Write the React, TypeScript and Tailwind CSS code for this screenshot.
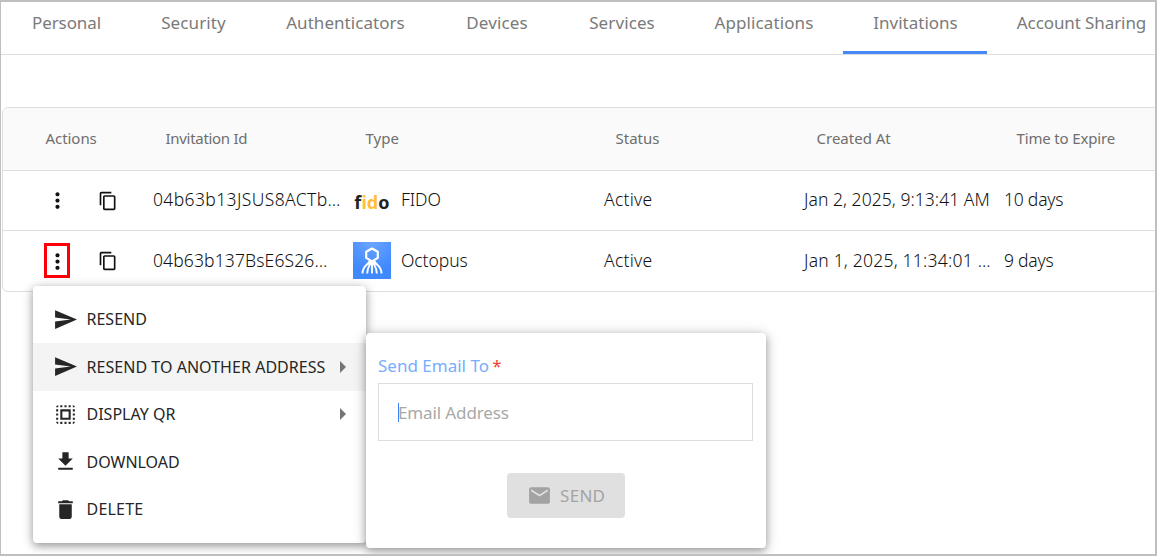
import type { ReactNode } from "react";
import {
  MdContentCopy,
  MdDelete,
  MdEmail,
  MdFileDownload,
  MdMoreVert,
  MdSelectAll,
  MdSend,
} from "react-icons/md";

const tabs = [
  { label: "Personal", box: "w-[128px]", track: "tracking-[-0.1px]" },
  { label: "Security", box: "w-[126px]", track: "tracking-[0.1px]" },
  { label: "Authenticators", box: "w-[178px]", track: "tracking-[0.05px]" },
  { label: "Devices", box: "w-[125px]", track: "tracking-[0.15px]" },
  { label: "Services", box: "w-[125px]", track: "tracking-[0.1px]" },
  { label: "Applications", box: "w-[159px]", track: "tracking-[0.1px]" },
  { label: "Invitations", box: "w-[144px]", track: "", active: true },
  { label: "Account Sharing", box: "w-[188px]", track: "tracking-[-0.1px]" },
];

const columns = [
  { label: "Actions", track: "tracking-[-0.05px]" },
  { label: "Invitation Id", track: "tracking-[-0.3px]" },
  { label: "Type", track: "" },
  { label: "Status", track: "" },
  { label: "Created At", track: "" },
  { label: "Time to Expire", track: "tracking-[-0.15px]" },
];

const grid = "grid grid-cols-[138px_200px_250px_201px_200px_200px] items-center";

function FidoLogo() {
  return (
    <span className="w-[38px] pt-[5px] text-center text-[18px] leading-none font-bold tracking-[0.1px] text-[#222]">
      f<span className="text-[#ffbf3b]">id</span>o
    </span>
  );
}

function OctopusLogo() {
  return (
    <svg className="h-[37px] w-[38px]" viewBox="0 0 38 37" fill="none">
      <defs>
        <radialGradient id="octo" cx="0.5" cy="0" r="0.8">
          <stop offset="0" stopColor="#6ba5ff" />
          <stop offset="1" stopColor="#3f89fc" />
        </radialGradient>
      </defs>
      <rect width="38" height="37" fill="url(#octo)" />
      <path
        d="M19 6.500l5.800 3.200v6.200l-5.800 3.500-5.800-3.500V9.700z"
        stroke="#fff"
        strokeWidth="2.200"
        strokeLinejoin="round"
      />
      <path
        d="M17 18.500c-1 4.500-7.500 4.500-7.500 13M18 19c-.3 4.500-3.800 5-3.800 12.500M19 18.500v13M20 19c.3 4.500 3.800 5 3.800 12.500M21 18.500c1 4.500 7.500 4.500 7.500 13"
        stroke="#fff"
        strokeWidth="1.900"
      />
      <path d="M16 18.500h6l1.500 4-4.500 1-4.500-1z" fill="#fff" />
    </svg>
  );
}

type Row = {
  id: ReactNode;
  type: ReactNode;
  logo: ReactNode;
  created: ReactNode;
  expire: string;
  marked?: boolean;
};

const rows: Row[] = [
  {
    id: <span className="tracking-[0.38px]">04b63b13JSUS8ACTb…</span>,
    logo: <FidoLogo />,
    type: <span className="tracking-[-0.1px]">FIDO</span>,
    created: <span className="tracking-[0.05px]">Jan 2, 2025, 9:13:41 AM</span>,
    expire: "10 days",
  },
  {
    id: <span className="tracking-[0.13px]">04b63b137BsE6S26…</span>,
    logo: <OctopusLogo />,
    type: <span className="tracking-[-0.08px]">Octopus</span>,
    created: <span className="tracking-[0.22px]">Jan 1, 2025, 11:34:01 …</span>,
    expire: "9 days",
    marked: true,
  },
];

const menu = [
  { label: "RESEND", icon: MdSend, track: "" },
  { label: "RESEND TO ANOTHER ADDRESS", icon: MdSend, track: "tracking-[0.04px]", sub: true, hover: true },
  { label: "DISPLAY QR", icon: MdSelectAll, track: "", sub: true },
  { label: "DOWNLOAD", icon: MdFileDownload, track: "" },
  { label: "DELETE", icon: MdDelete, track: "tracking-[0.2px]" },
];

function Tabs() {
  return (
    <nav className="flex h-[53px] w-[1174px] border-b border-[#dedede] pl-px text-[17px] text-[#7a7a7a]">
      {tabs.map((t) => (
        <div
          key={t.label}
          className={`flex shrink-0 justify-center border-b-[3px] pt-[9px] pl-px leading-6 ${t.box} ${t.track} ${t.active ? "border-[#4489f7]" : "border-transparent"}`}
        >
          {t.label}
        </div>
      ))}
    </nav>
  );
}

function Table() {
  return (
    <section className="mt-[52px] ml-px w-[1190px] overflow-hidden rounded-md border border-[#dedede]">
      <header className={`${grid} h-[63px] border-b border-[#dedede] bg-[#fafafa] pb-[2px] pl-3 text-[15px] text-[#6e6e6e]`}>
        {columns.map((c, i) => (
          <div key={c.label} className={`${c.track} ${i === 0 ? "pl-[30.5px]" : "pl-[12.5px]"}`}>
            {c.label}
          </div>
        ))}
      </header>
      {rows.map((r) => (
        <div
          key={r.expire}
          className={`${grid} h-[60px] border-b border-[#dedede] pb-[2px] pl-3 text-[17.5px] font-light whitespace-nowrap text-[#111] last:border-b-0`}
        >
          <div className="flex items-center gap-[28px] pl-[29px]">
            <span
              className={`flex h-[35px] w-[26px] items-center justify-center border-3 pt-[2px] pl-px ${r.marked ? "border-[#fb0007]" : "border-transparent"}`}
            >
              <MdMoreVert className="size-[25px] shrink-0" />
            </span>
            <span className="pt-[2px]">
              <MdContentCopy className="size-[20px]" />
            </span>
          </div>
          <div>{r.id}</div>
          <div className="flex items-center gap-[10px]">
            {r.logo}
            {r.type}
          </div>
          <div className="pl-px tracking-[0.25px]">Active</div>
          <div>{r.created}</div>
          <div className="tracking-[-0.22px]">{r.expire}</div>
        </div>
      ))}
    </section>
  );
}

function ActionMenu() {
  return (
    <div className="absolute top-[286px] left-[33px] h-[257px] w-[333px] rounded bg-white pt-[9.5px] shadow-[0_3px_8px_rgba(0,0,0,0.35),0_1px_14px_rgba(0,0,0,0.12)]">
      {menu.map((m) => (
        <div
          key={m.label}
          className={`flex h-[47.5px] items-center pr-5 pl-5 text-[16px] text-[#262626] ${m.hover ? "bg-[#f4f4f4]" : ""}`}
        >
          <m.icon className="mr-[8.5px] size-[25px] shrink-0" />
          <span className={`whitespace-nowrap ${m.track}`}>{m.label}</span>
          {m.sub && (
            <svg className="ml-auto h-3 w-[6px] shrink-0" viewBox="0 0 6 12" fill="#757575">
              <path d="M0 0l6 6-6 6z" />
            </svg>
          )}
        </div>
      ))}
    </div>
  );
}

function SendForm() {
  return (
    <div className="absolute top-[333px] left-[366px] flex h-[215px] w-[400px] flex-col rounded bg-white px-3 pt-[21px] shadow-[0_3px_8px_rgba(0,0,0,0.35),0_1px_16px_rgba(0,0,0,0.14)]">
      <label className="text-[17px] leading-6 text-[#77adfd]">
        Send Email To <span className="-ml-px text-[#f44336]">*</span>
      </label>
      <div className="mt-[5px] flex h-[58px] w-[375px] items-center border border-[#dedede] pl-[19px] text-[17px] text-[#a8a8a8]">
        <span className="-mr-px h-[19px] w-px bg-[#3b82f6]" />
        <span className="pt-[2px] tracking-[-0.12px]">Email Address</span>
      </div>
      <div className="mt-8 ml-[129px] flex h-[45px] w-[118px] items-center rounded bg-[#e0e0e0] pl-[20px] text-[17px] text-[#a3a3a3]">
        <MdEmail className="mr-[8px] size-[25px]" />
        <span className="tracking-[0.3px]">SEND</span>
      </div>
    </div>
  );
}

export default function App() {
  return (
    <main className="relative h-[556px] w-[1157px] overflow-hidden border-t-2 border-r-2 border-b-2 border-l border-[#bfbfbf] bg-white font-['Noto_Sans',sans-serif]">
      <Tabs />
      <Table />
      <div className="absolute -top-[2px] -left-px">
        <ActionMenu />
        <SendForm />
      </div>
    </main>
  );
}
